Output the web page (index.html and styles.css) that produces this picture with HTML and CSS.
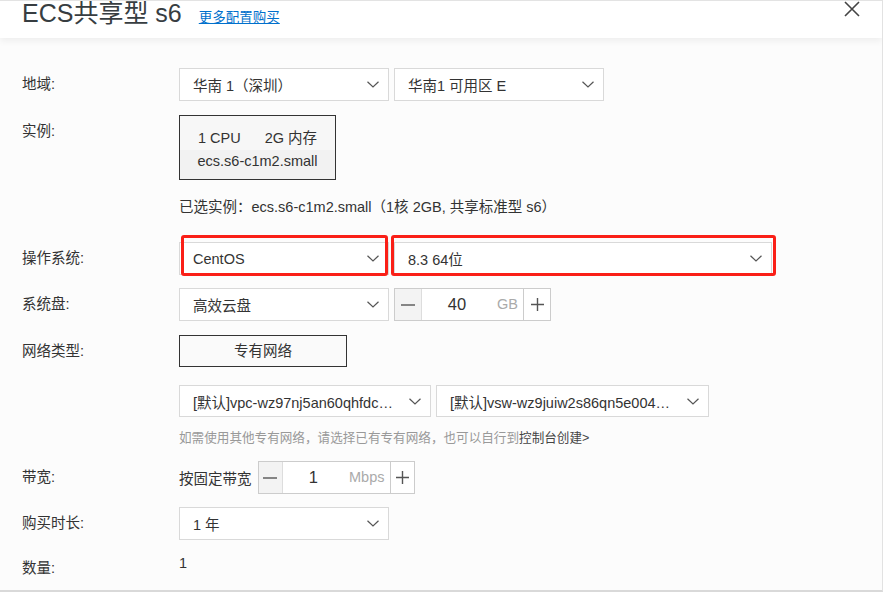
FILE: index.html
```html
<!DOCTYPE html>
<html lang="zh-CN">
<head>
<meta charset="utf-8">
<title>ECS共享型 s6</title>
<link rel="stylesheet" href="styles.css">
</head>
<body>
<div class="dialog">
  <div class="header">
    <h1 class="title">ECS共享型 s6</h1>
    <a class="more" href="#">更多配置购买</a>
    <button class="close" type="button" aria-label="关闭">
      <svg width="16" height="16" viewBox="0 0 16 16"><path d="M1 1L15 15M15 1L1 15" stroke="#444" stroke-width="1.6" fill="none"/></svg>
    </button>
  </div>
  <div class="form">
    <div class="row r-region">
      <div class="label">地域:</div>
      <div class="ctrl">
        <div class="select w210"><span class="val">华南 1（深圳）</span><svg class="chev" width="12" height="7" viewBox="0 0 12 7"><path d="M0.5 0.8L6 6L11.5 0.8" stroke="#555" stroke-width="1.2" fill="none"/></svg></div>
        <div class="select w210"><span class="val">华南1 可用区 E</span><svg class="chev" width="12" height="7" viewBox="0 0 12 7"><path d="M0.5 0.8L6 6L11.5 0.8" stroke="#555" stroke-width="1.2" fill="none"/></svg></div>
      </div>
    </div>
    <div class="row r-inst">
      <div class="label">实例:</div>
      <div class="card">
        <div class="card-top"><span>1 CPU</span><span class="mem">2G 内存</span></div>
        <div class="card-bot">ecs.s6-c1m2.small</div>
      </div>
    </div>
    <div class="sub r-note">已选实例：ecs.s6-c1m2.small（1核 2GB, 共享标准型 s6）</div>
    <div class="row r-os">
      <div class="label">操作系统:</div>
      <div class="ctrl">
        <div class="select w210 mark mark-a"><span class="val">CentOS</span><svg class="chev" width="12" height="7" viewBox="0 0 12 7"><path d="M0.5 0.8L6 6L11.5 0.8" stroke="#555" stroke-width="1.2" fill="none"/></svg></div>
        <div class="select w378 mark mark-b"><span class="val">8.3 64位</span><svg class="chev" width="12" height="7" viewBox="0 0 12 7"><path d="M0.5 0.8L6 6L11.5 0.8" stroke="#555" stroke-width="1.2" fill="none"/></svg></div>
      </div>
    </div>
    <div class="row r-disk">
      <div class="label">系统盘:</div>
      <div class="ctrl">
        <div class="select w210"><span class="val">高效云盘</span><svg class="chev" width="12" height="7" viewBox="0 0 12 7"><path d="M0.5 0.8L6 6L11.5 0.8" stroke="#555" stroke-width="1.2" fill="none"/></svg></div>
        <div class="num">
          <span class="btn minus"><svg width="14" height="2" viewBox="0 0 14 2"><path d="M0 1H14" stroke="#555" stroke-width="1.4"/></svg></span>
          <span class="num-val">40</span><span class="unit">GB</span>
          <span class="btn plus"><svg width="13" height="13" viewBox="0 0 13 13"><path d="M0 6.5H13M6.5 0V13" stroke="#555" stroke-width="1.4"/></svg></span>
        </div>
      </div>
    </div>
    <div class="row r-net">
      <div class="label">网络类型:</div>
      <div class="chip">专有网络</div>
    </div>
    <div class="sub r-vpc ctrl">
      <div class="select w252"><span class="val">[默认]vpc-wz97nj5an60qhfdc…</span><svg class="chev" width="12" height="7" viewBox="0 0 12 7"><path d="M0.5 0.8L6 6L11.5 0.8" stroke="#555" stroke-width="1.2" fill="none"/></svg></div>
      <div class="select w273"><span class="val">[默认]vsw-wz9juiw2s86qn5e004…</span><svg class="chev" width="12" height="7" viewBox="0 0 12 7"><path d="M0.5 0.8L6 6L11.5 0.8" stroke="#555" stroke-width="1.2" fill="none"/></svg></div>
    </div>
    <div class="sub r-hint">如需使用其他专有网络，请选择已有专有网络，也可以自行到<a href="#" class="hint-link">控制台创建&gt;</a></div>
    <div class="row r-bw">
      <div class="label">带宽:</div>
      <div class="ctrl bw-ctrl">
        <span class="bw-text">按固定带宽</span>
        <div class="num num-sm">
          <span class="btn minus"><svg width="14" height="2" viewBox="0 0 14 2"><path d="M0 1H14" stroke="#555" stroke-width="1.4"/></svg></span>
          <span class="num-val">1</span><span class="unit">Mbps</span>
          <span class="btn plus"><svg width="13" height="13" viewBox="0 0 13 13"><path d="M0 6.5H13M6.5 0V13" stroke="#555" stroke-width="1.4"/></svg></span>
        </div>
      </div>
    </div>
    <div class="row r-dur">
      <div class="label">购买时长:</div>
      <div class="select w210"><span class="val">1 年</span><svg class="chev" width="12" height="7" viewBox="0 0 12 7"><path d="M0.5 0.8L6 6L11.5 0.8" stroke="#555" stroke-width="1.2" fill="none"/></svg></div>
    </div>
    <div class="row r-qty">
      <div class="label">数量:</div>
      <div class="qty">1</div>
    </div>
  </div>
</div>
</body>
</html>
```

FILE: styles.css
```css
* { box-sizing: border-box; }
html, body { margin: 0; padding: 0; }
body {
  width: 883px;
  height: 592px;
  overflow: hidden;
  background: #fff;
  color: #333;
  font-family: "Liberation Sans", "Noto Sans CJK SC", sans-serif;
}
.dialog {
  height: 592px;
  border-top: 1px solid #e3e3e3;
  border-right: 1px solid #e2e2e2;
  border-bottom: 2px solid #d9d9d9;
  background: #fcfcfc;
  overflow: hidden;
}
.header {
  height: 37px;
  background: #fff;
  display: flex;
  align-items: baseline;
  padding: 0 22px;
  box-shadow: 0 3px 7px rgba(0, 0, 0, 0.06);
  position: relative;
}
.title {
  margin: 0;
  font-size: 25px;
  font-weight: normal;
  line-height: 24px;
  color: #373d41;
}
.more {
  margin-left: 17px;
  font-size: 13.5px;
  color: #0070cc;
  text-decoration: underline;
}
.close {
  margin-left: auto;
  align-self: flex-start;
  margin-top: 0;
  width: 16px;
  height: 16px;
  padding: 0;
  border: 0;
  background: none;
  display: block;
}
.close svg { display: block; }

.form { padding: 30px 0 0 22px; }
.row { display: flex; align-items: flex-start; }
.label {
  width: 157px;
  flex: none;
  font-size: 14.5px;
  line-height: 33px;
  color: #333;
}
.ctrl { display: flex; gap: 5px; align-items: center; }
.sub { padding-left: 157px; }

.select {
  height: 33px;
  border: 1px solid #d9d9d9;
  background: #fff;
  display: flex;
  align-items: center;
  justify-content: space-between;
  padding: 0 9px 0 13px;
  font-size: 14.5px;
  color: #333;
  white-space: nowrap;
}
.select .chev { flex: none; display: block; }
.w210 { width: 210px; }
.w378 { width: 378px; }
.w252 { width: 252px; }
.w273 { width: 273px; }

.mark { position: relative; }
.mark::after {
  content: "";
  position: absolute;
  border: 3px solid #fa1f17;
  border-radius: 3px;
  pointer-events: none;
}
.mark-a::after { left: 1px; right: 0; top: -8px; bottom: -2px; }
.mark-b::after { left: -4px; right: -5px; top: -8px; bottom: -2px; }

.r-inst { margin-top: 14px; }
.card {
  width: 157px;
  height: 65px;
  border: 1px solid #333;
  background: #f2f2f2;
  text-align: center;
  font-size: 14.5px;
  color: #333;
}
.card-top {
  background: #f7f7f7;
  height: 34px;
  padding-top: 12px;
  line-height: 20px;
}
.card-top .mem { margin-left: 24px; }
.card-bot { line-height: 23px; }

.r-note { margin-top: 17px; font-size: 14.5px; line-height: 20px; color: #333; }
.r-os { margin-top: 25px; }
.r-disk { margin-top: 13px; }

.num {
  width: 157px;
  height: 33px;
  border: 1px solid #ccc;
  background: #fff;
  display: flex;
  align-items: stretch;
}
.num .btn {
  width: 27px;
  flex: none;
  display: flex;
  align-items: center;
  justify-content: center;
}
.num .minus { background: #f3f3f3; border-right: 1px solid #ddd; }
.num .plus { border-left: 1px solid #ccc; }
.num .btn svg { display: block; }
.num-val {
  flex: 1;
  text-align: center;
  font-size: 16.5px;
  line-height: 31px;
  color: #333;
  padding-right: 5px;
}
.unit {
  font-size: 14.5px;
  line-height: 31px;
  color: #aaa;
  padding-right: 5px;
}
.num-sm .btn { width: 24px; }

.r-net { margin-top: 14px; }
.chip {
  width: 168px;
  height: 32px;
  border: 1px solid #333;
  background: #fafafa;
  text-align: center;
  font-size: 14.5px;
  line-height: 30px;
  color: #333;
}
.r-vpc { margin-top: 17px; }
.r-vpc .select { height: 32px; }
.r-hint { margin-top: 12px; font-size: 12.6px; line-height: 18px; color: #999; }
.hint-link { color: #444; text-decoration: none; }

.r-bw { margin-top: 14px; }
.bw-ctrl { gap: 6px; }
.bw-text { font-size: 14.5px; color: #333; }
.r-dur { margin-top: 13px; }
.r-qty { margin-top: 12px; }
.qty { font-size: 14.5px; line-height: 22px; color: #333; }
```
